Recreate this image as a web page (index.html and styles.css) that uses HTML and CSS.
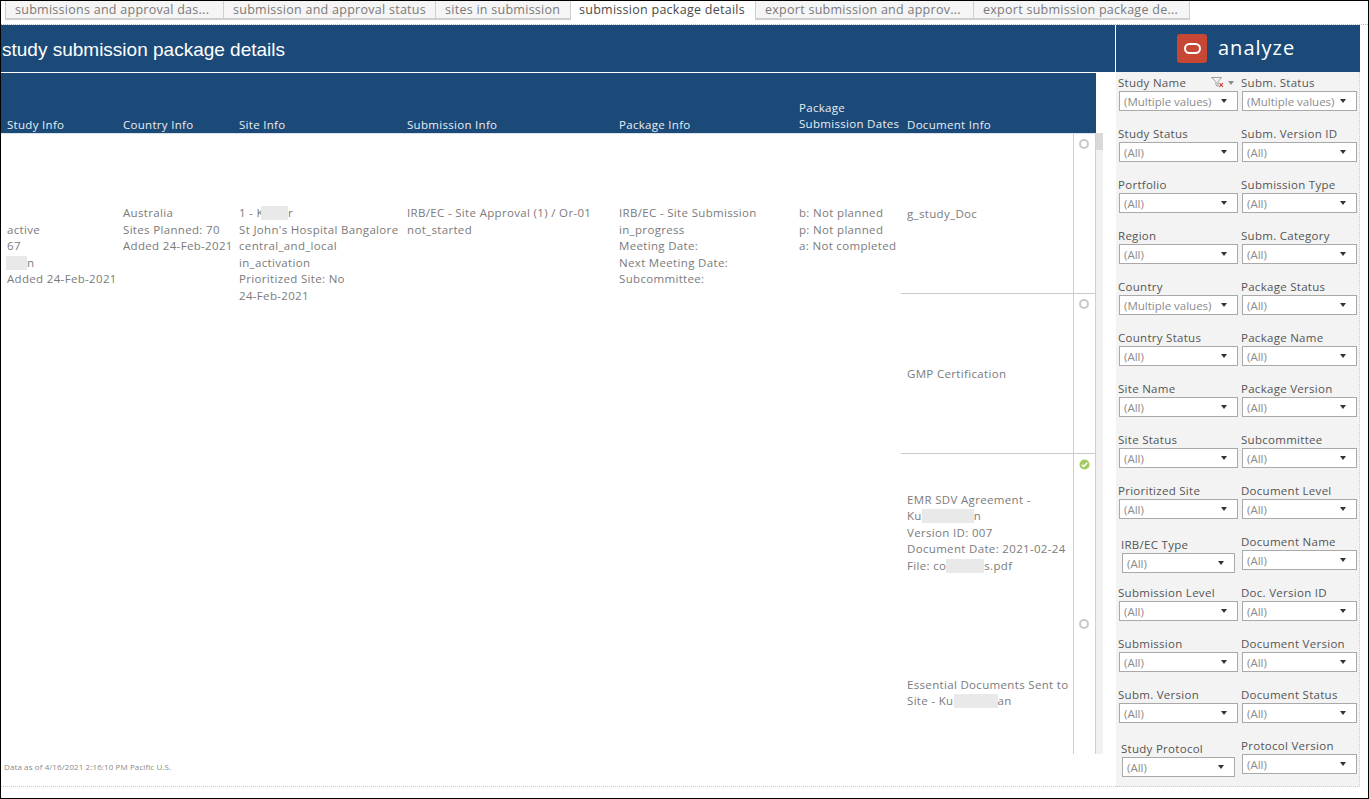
FILE: index.html
```html
<!DOCTYPE html>
<html lang="en">
<head>
<meta charset="utf-8">
<title>study submission package details</title>
<link rel="stylesheet" href="styles.css">
</head>
<body>
<div class="frame">
  <nav class="tabs">
    <div class="tab t1">submissions and approval das...</div>
    <div class="tab t2">submission and approval status</div>
    <div class="tab t3">sites in submission</div>
    <div class="tab t4 active-tab">submission package details</div>
    <div class="tab t5">export submission and approv...</div>
    <div class="tab t6">export submission package de...</div>
  </nav>
  <div class="tab-gap"></div>
  <header class="banner">
    <h1 class="title">study submission package details</h1>
    <div class="brand">
      <span class="logo"><span class="logo-ring"></span></span>
      <span class="brand-name">analyze</span>
    </div>
  </header>
  <div class="content">
    <main class="report">
      <div class="table-wrap">
        <div class="grid head">
          <div class="hcell">Study Info</div>
          <div class="hcell">Country Info</div>
          <div class="hcell">Site Info</div>
          <div class="hcell">Submission Info</div>
          <div class="hcell">Package Info</div>
          <div class="hcell two-line">Package<br>Submission Dates</div>
          <div class="hcell">Document Info</div>
          <div class="hcell"></div>
        </div>
        <div class="body-wrap">
          <div class="grid body">
            <div class="cell top"><br>active<br>67<br><span class="blur b-study"></span>n<br>Added 24-Feb-2021</div>
            <div class="cell top">Australia<br>Sites Planned: 70<br>Added 24-Feb-2021</div>
            <div class="cell top">1 - K<span class="blur b-site"></span>r<br>St John's Hospital Bangalore<br>central_and_local<br>in_activation<br>Prioritized Site: No<br>24-Feb-2021</div>
            <div class="cell top">IRB/EC - Site Approval (1) / Or-01<br>not_started</div>
            <div class="cell top">IRB/EC - Site Submission<br>in_progress<br>Meeting Date:<br>Next Meeting Date:<br>Subcommittee:</div>
            <div class="cell top">b: Not planned<br>p: Not planned<br>a: Not completed</div>
            <div class="cell doc lined"><div>g_study_Doc</div></div>
            <div class="cell mark lined"><span class="ring"></span></div>

            <div class="cell spacer s2"></div>
            <div class="cell doc lined"><div>GMP Certification</div></div>
            <div class="cell mark lined"><span class="ring"></span></div>

            <div class="cell spacer s3"></div>
            <div class="cell doc"><div>EMR SDV Agreement -<br>Ku<span class="blur b-ku"></span>n<br>Version ID: 007<br>Document Date: 2021-02-24<br>File: co<span class="blur b-file"></span>s.pdf</div></div>
            <div class="cell mark">
              <svg class="check" viewBox="0 0 12 12" width="11" height="11"><circle cx="6" cy="6" r="5.5" fill="#a3cb5f"/><path d="M3.2 6.2 5.2 8.2 8.9 4.2" fill="none" stroke="#fff" stroke-width="1.6"/></svg>
            </div>

            <div class="cell spacer s4"></div>
            <div class="cell doc"><div>Essential Documents Sent to<br>Site - Ku<span class="blur b-ess"></span>an</div></div>
            <div class="cell mark"><span class="ring"></span></div>
          </div>
          <div class="scrollbar"><div class="thumb"></div></div>
        </div>
      </div>
      <div class="footnote">Data as of 4/16/2021 2:16:10 PM Pacific U.S.</div>
    </main>
    <aside class="filters">
      <div class="filter"><div class="flabel">Study Name<span class="ficons"><svg width="13" height="11" viewBox="0 0 13 11"><path d="M.5.5H10.5L7 4.8V9.5L5 8V4.8Z" fill="none" stroke="#8c8c8c" stroke-width=".8"/><path d="M8.5 6l3.4 3.8M11.9 6 8.5 9.8" stroke="#d2352c" stroke-width="1.1"/></svg><span class="mini-arrow"></span></span></div><div class="select"><span>(Multiple values)</span><i></i></div></div>
      <div class="filter"><div class="flabel">Subm. Status</div><div class="select"><span>(Multiple values)</span><i></i></div></div>
      <div class="filter"><div class="flabel">Study Status</div><div class="select"><span>(All)</span><i></i></div></div>
      <div class="filter"><div class="flabel">Subm. Version ID</div><div class="select"><span>(All)</span><i></i></div></div>
      <div class="filter"><div class="flabel">Portfolio</div><div class="select"><span>(All)</span><i></i></div></div>
      <div class="filter"><div class="flabel">Submission Type</div><div class="select"><span>(All)</span><i></i></div></div>
      <div class="filter"><div class="flabel">Region</div><div class="select"><span>(All)</span><i></i></div></div>
      <div class="filter"><div class="flabel">Subm. Category</div><div class="select"><span>(All)</span><i></i></div></div>
      <div class="filter"><div class="flabel">Country</div><div class="select"><span>(Multiple values)</span><i></i></div></div>
      <div class="filter"><div class="flabel">Package Status</div><div class="select"><span>(All)</span><i></i></div></div>
      <div class="filter"><div class="flabel">Country Status</div><div class="select"><span>(All)</span><i></i></div></div>
      <div class="filter"><div class="flabel">Package Name</div><div class="select"><span>(All)</span><i></i></div></div>
      <div class="filter"><div class="flabel">Site Name</div><div class="select"><span>(All)</span><i></i></div></div>
      <div class="filter"><div class="flabel">Package Version</div><div class="select"><span>(All)</span><i></i></div></div>
      <div class="filter"><div class="flabel">Site Status</div><div class="select"><span>(All)</span><i></i></div></div>
      <div class="filter"><div class="flabel">Subcommittee</div><div class="select"><span>(All)</span><i></i></div></div>
      <div class="filter"><div class="flabel">Prioritized Site</div><div class="select"><span>(All)</span><i></i></div></div>
      <div class="filter"><div class="flabel">Document Level</div><div class="select"><span>(All)</span><i></i></div></div>
      <div class="filter shifted"><div class="flabel">IRB/EC Type</div><div class="select"><span>(All)</span><i></i></div></div>
      <div class="filter"><div class="flabel">Document Name</div><div class="select"><span>(All)</span><i></i></div></div>
      <div class="filter"><div class="flabel">Submission Level</div><div class="select"><span>(All)</span><i></i></div></div>
      <div class="filter"><div class="flabel">Doc. Version ID</div><div class="select"><span>(All)</span><i></i></div></div>
      <div class="filter"><div class="flabel">Submission</div><div class="select"><span>(All)</span><i></i></div></div>
      <div class="filter"><div class="flabel">Document Version</div><div class="select"><span>(All)</span><i></i></div></div>
      <div class="filter"><div class="flabel">Subm. Version</div><div class="select"><span>(All)</span><i></i></div></div>
      <div class="filter"><div class="flabel">Document Status</div><div class="select"><span>(All)</span><i></i></div></div>
      <div class="filter shifted"><div class="flabel">Study Protocol</div><div class="select"><span>(All)</span><i></i></div></div>
      <div class="filter"><div class="flabel">Protocol Version</div><div class="select"><span>(All)</span><i></i></div></div>
    </aside>
  </div>
</div>
</body>
</html>
```
FILE: styles.css
```css
* { box-sizing: border-box; }
html, body { margin: 0; padding: 0; background: #fff; }
body { width: 1369px; height: 799px; overflow: hidden; font-family: "Open Sans", "Lato", sans-serif; }
.frame {
  width: 1369px; height: 799px;
  border: 1px solid #000;
  display: flex; flex-direction: column; overflow: hidden;
}
.tabs { height: 19px; display: flex; padding-left: 4px; }
.tab {
  height: 19px; padding-left: 9px; font-size: 12.5px; letter-spacing: .27px; line-height: 17px; color: #7a7a7a;
  background: #f5f5f5; border-left: 1px solid #cfcfcf; border-bottom: 2px solid #cfcfcf; white-space: nowrap;
}
.t1 { width: 218px; }
.t2 { width: 212px; }
.t3 { width: 135px; }
.t4 { width: 185px; padding-left: 8px; }
.t5 { width: 218px; }
.t6 { width: 217px; border-right: 1px solid #cfcfcf; }
.active-tab { background: #fff; color: #4a4a4a; border-bottom: 0; }
.tab-gap { height: 5px; border-bottom: 1px dotted #bbb; }
.banner { height: 47px; width: 1359px; display: flex; background: #1b4a79; flex: none; }
.title {
  margin: 0; width: 1114px; font: 400 19px/50px "Liberation Sans", Arial, sans-serif; color: #fff; padding-left: 1px; white-space: nowrap;
}
.brand { width: 245px; border-left: 1px solid #fff; display: flex; align-items: center; padding-left: 61px; }
.logo { width: 30px; height: 29px; border-radius: 3px; background: #c74634; display: flex; align-items: center; justify-content: center; }
.logo-ring { width: 17px; height: 11px; border: 2px solid #fff; border-radius: 5.5px; }
.brand-name { margin: -3px 0 0 11px; font-size: 20px; color: #fff; letter-spacing: 1px; line-height: 29px; }
.content { flex: 1; display: flex; width: 1359px; }
.report { width: 1115px; display: flex; flex-direction: column; border-bottom: 1px dotted #ccc; height: 715px; }
.table-wrap { padding-top: 1px; }
.grid { display: grid; grid-template-columns: 116px 116px 168px 212px 180px 108px 172px 23px; }
.head { height: 60px; background: #1b4a79; width: 1095px; }
.hcell { align-self: end; padding: 0 0 0 6px; color: #e9eef3; font-size: 11.5px; letter-spacing: .3px; line-height: 16px; white-space: nowrap; }
.two-line { padding-bottom: 1px; }
.body-wrap { height: 621px; display: flex; overflow: hidden; }
.body { width: 1095px; grid-template-rows: 160px 160px 160px 160px; flex: none; border-top: 1px solid #d8e2ec; }
.cell { font-size: 11.5px; letter-spacing: .33px; line-height: 16.5px; color: #7b7b7b; padding-left: 6px; white-space: nowrap; }
.top { grid-row: 1; padding-top: 71px; }
.spacer { grid-column: 1 / span 6; padding: 0; }
.doc { display: flex; align-items: center; padding-bottom: 2px; }
.doc.lined { padding-top: 2px; padding-bottom: 0; }
.lined { border-bottom: 1px solid #c9c9c9; }
.mark { border-left: 1px solid #cfcfcf; border-right: 1px solid #cfcfcf; padding: 5px 0 0 5px; }
.ring { display: block; width: 10px; height: 10px; border-radius: 50%; border: 2px solid #c8c8c8; background: #fff; }
.check { display: block; }
.blur { display: inline-block; height: 14px; background: #e9e9e9; vertical-align: -3px; }
.b-study { width: 21px; margin-left: -1px; }
.b-site { width: 27px; margin-left: -3px; }
.b-ku { width: 52px; }
.b-file { width: 38px; }
.b-ess { width: 44px; }
.scrollbar { width: 7px; background: #f1f1f1; flex: none; }
.thumb { height: 17px; background: #d9d9d9; }
.footnote { padding: 8px 0 0 3px; font-size: 8px; letter-spacing: .1px; line-height: 9px; color: #8a8a8a; }
.filters {
  width: 244px; height: 715px; background: #f3f3f3; padding: 2px 0 0 2px;
  display: grid; grid-template-columns: 123px 119px; grid-auto-rows: 51px; border-right: 1px dotted #ccc; border-bottom: 1px dotted #ccc;
}
.filter { min-width: 0; padding-right: 3px; }
.shifted { padding: 3px 6px 0 3px; }
.flabel { height: 17px; font-size: 11.5px; letter-spacing: .28px; line-height: 17px; color: #555; white-space: nowrap; display: flex; justify-content: space-between; align-items: center; }
.ficons { display: flex; align-items: center; gap: 4px; padding-right: 4px; }
.mini-arrow { width: 0; height: 0; border: 3.5px solid transparent; border-top: 4px solid #8c8c8c; border-bottom: 0; }
.select {
  height: 20px; margin-left: 1px; background: #fff; border: 1px solid #a9a9a9; display: flex; align-items: center; justify-content: space-between;
  padding: 0 10px 0 4px; font-size: 11.5px; color: #8b8b8b; white-space: nowrap;
}
.select i { width: 0; height: 0; border: 3px solid transparent; border-top: 4px solid #333; border-bottom: 0; border-left-width: 3.5px; border-right-width: 3.5px; }
```
